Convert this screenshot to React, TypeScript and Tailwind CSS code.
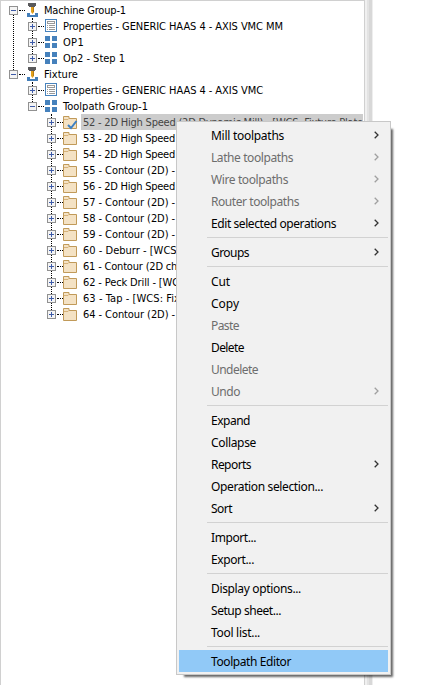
import { useLayoutEffect, useRef, useState } from 'react';

type IconKind = 'machine' | 'props' | 'group' | 'folder' | 'checked';
type Row = { level: number; icon: IconKind; label: string; width: number; open?: boolean; selected?: boolean };

const rows: Row[] = [
  { level: 0, icon: 'machine', label: 'Machine Group-1', width: 82, open: true },
  { level: 1, icon: 'props', label: 'Properties - GENERIC HAAS 4 - AXIS VMC MM', width: 220 },
  { level: 1, icon: 'group', label: 'OP1', width: 21 },
  { level: 1, icon: 'group', label: 'Op2 - Step 1', width: 62 },
  { level: 0, icon: 'machine', label: 'Fixture', width: 34, open: true },
  { level: 1, icon: 'props', label: 'Properties - GENERIC HAAS 4 - AXIS VMC', width: 200 },
  { level: 1, icon: 'group', label: 'Toolpath Group-1', width: 85, open: true },
  { level: 2, icon: 'checked', label: '52 - 2D High Speed (2D Dynamic Mill) - [WCS: Fixture Plate', width: 280, selected: true },
  { level: 2, icon: 'folder', label: '53 - 2D High Speed', width: 92 },
  { level: 2, icon: 'folder', label: '54 - 2D High Speed', width: 92 },
  { level: 2, icon: 'folder', label: '55 - Contour (2D) -', width: 92 },
  { level: 2, icon: 'folder', label: '56 - 2D High Speed', width: 92 },
  { level: 2, icon: 'folder', label: '57 - Contour (2D) -', width: 92 },
  { level: 2, icon: 'folder', label: '58 - Contour (2D) -', width: 92 },
  { level: 2, icon: 'folder', label: '59 - Contour (2D) -', width: 92 },
  { level: 2, icon: 'folder', label: '60 - Deburr - [WCS:', width: 97 },
  { level: 2, icon: 'folder', label: '61 - Contour (2D cha', width: 100 },
  { level: 2, icon: 'folder', label: '62 - Peck Drill - [WC', width: 96 },
  { level: 2, icon: 'folder', label: '63 - Tap - [WCS: Fix', width: 97 },
  { level: 2, icon: 'folder', label: '64 - Contour (2D) -', width: 92 },
];

type Item = { label: string; width: number; arrow?: boolean; off?: boolean; active?: boolean };

const sections: Item[][] = [
  [
    { label: 'Mill toolpaths', width: 73, arrow: true },
    { label: 'Lathe toolpaths', width: 82, arrow: true, off: true },
    { label: 'Wire toolpaths', width: 77, arrow: true, off: true },
    { label: 'Router toolpaths', width: 88, arrow: true, off: true },
    { label: 'Edit selected operations', width: 125, arrow: true },
  ],
  [{ label: 'Groups', width: 38, arrow: true }],
  [
    { label: 'Cut', width: 19 },
    { label: 'Copy', width: 28 },
    { label: 'Paste', width: 28, off: true },
    { label: 'Delete', width: 33 },
    { label: 'Undelete', width: 47, off: true },
    { label: 'Undo', width: 29, arrow: true, off: true },
  ],
  [
    { label: 'Expand', width: 39 },
    { label: 'Collapse', width: 45 },
    { label: 'Reports', width: 40, arrow: true },
    { label: 'Operation selection...', width: 112 },
    { label: 'Sort', width: 21, arrow: true },
  ],
  [
    { label: 'Import...', width: 45 },
    { label: 'Export...', width: 43 },
  ],
  [
    { label: 'Display options...', width: 90 },
    { label: 'Setup sheet...', width: 70 },
    { label: 'Tool list...', width: 49 },
  ],
  [{ label: 'Toolpath Editor', width: 80, active: true }],
];

// Spreads a label's letters evenly so that it takes up the given width.
function FitText({ text, width }: { text: string; width: number }) {
  const ref = useRef<HTMLSpanElement>(null);
  const [spacing, setSpacing] = useState(0);
  useLayoutEffect(() => {
    if (ref.current) {
      setSpacing((width - ref.current.getBoundingClientRect().width) / text.length);
    }
  }, [text, width]);
  return (
    <span ref={ref} className="whitespace-pre" style={{ letterSpacing: spacing }}>
      {text}
    </span>
  );
}

function Expander({ open }: { open?: boolean }) {
  return (
    <svg className="mt-1 h-[9px] w-[9px] shrink-0" viewBox="0 0 9 9" shapeRendering="crispEdges">
      <rect x=".5" y=".5" width="8" height="8" fill="#f4f4f4" stroke="#919191" />
      <path d={open ? 'M2 4.5h5' : 'M2 4.5h5M4.5 2v5'} stroke="#3c5aa8" />
    </svg>
  );
}

function RowIcon({ kind }: { kind: IconKind }) {
  if (kind === 'machine') {
    return (
      <svg className="mt-px h-[14px] w-[11px] shrink-0" viewBox="0 0 11 14">
        <path d="M0 10h3v2h5v-2h3v4H0z" fill="#447fba" />
        <path d="M1 0h8v3H8v1H2V3H1z" fill="#59595b" />
        <path d="M4 4h3v5L5.500 11 4 9z" fill="#e3a11c" />
        <path d="M6 4h1v5H6z" fill="#b57c16" />
      </svg>
    );
  }
  if (kind === 'props') {
    return (
      <svg className="mt-px h-[13px] w-3 shrink-0" viewBox="0 0 12 13" shapeRendering="crispEdges">
        <rect x=".5" y=".5" width="11" height="12" fill="#fff" stroke="#4883bd" />
        <rect x="2.5" y="2.5" width="7" height="2" fill="#fff" stroke="#999" />
        <path d="M2 6.5h1M4 6.5h6M2 8.5h1M4 8.5h6M2 10.5h1M4 10.5h6" stroke="#999" />
      </svg>
    );
  }
  if (kind === 'group') {
    return (
      <svg className="mt-[2px] h-3 w-3 shrink-0" viewBox="0 0 12 12">
        <path d="M0 0h5v5H0zM7 0h5v5H7zM0 7h5v5H0zM7 7h5v5H7z" fill="#4581bc" />
      </svg>
    );
  }
  return (
    <svg className="mt-[2px] h-[13px] w-[14px] shrink-0 overflow-visible" viewBox="0 0 14 13">
      <path d="M.5 .5h5.500v2h7.500v10H.5z" fill="#f4e2c4" stroke="#c19a59" />
      <path d="M1 3.500h4l1-1" fill="none" stroke="#d5b27b" />
      {kind === 'checked' && <path d="M5 9l3 3L13.500 5" fill="none" stroke="#3d80c4" strokeWidth="2" />}
    </svg>
  );
}

const indent = ['pl-[8px]', 'pl-[27px]', 'pl-[46px]'];
const iconGap = ['w-[9px]', 'w-[8px]', 'w-[7px]'];
const labelGap = ['pl-[6px]', 'pl-[6px]', 'pl-[4px]'];

function Tree() {
  return (
    <div className="relative h-[685px] w-[365px] shrink-0 overflow-hidden border-x border-t border-[#d0d0d0] bg-white pt-px font-['DejaVu_Sans_Condensed','DejaVu_Sans',sans-serif] text-[11px] text-black">
      <div className="absolute left-[12px] top-[14px] h-[55px] border-l border-dotted border-black" />
      <div className="absolute left-[31px] top-[17px] h-[40px] border-l border-dotted border-black" />
      <div className="absolute left-[31px] top-[81px] h-[24px] border-l border-dotted border-black" />
      <div className="absolute left-[50px] top-[113px] h-[200px] border-l border-dotted border-black" />
      {rows.map((r) => (
        <div key={r.label} className={`relative flex h-4 items-start ${indent[r.level]}`}>
          <Expander open={r.open} />
          <div className={`mt-2 shrink-0 ${iconGap[r.level]}`}>
            <div className="ml-px w-[6px] border-t border-dotted border-black" />
          </div>
          <RowIcon kind={r.icon} />
          <div className={labelGap[r.level]}>
            <div className={`h-4 pt-px leading-4 ${r.level === 2 ? 'pl-[2px]' : ''} ${r.selected ? 'bg-[#cccccc] text-[#444]' : ''}`}>
              <FitText text={r.label} width={r.width} />
            </div>
          </div>
        </div>
      ))}
    </div>
  );
}

function ContextMenu() {
  return (
    <div className="absolute left-[176px] top-[121px] w-[215px] border border-[#c8c8c8] bg-[#f1f1f1] p-[2px] font-['Noto_Sans','Open_Sans',sans-serif] text-[12px] text-black shadow-[5px_5px_2px_-3px_rgba(0,0,0,0.6)]">
      {sections.map((items, i) => (
        <div key={items[0].label}>
          {i > 0 && (
            <div className="flex h-[7px] items-center pl-7">
              <div className="h-px w-full bg-[#d2d2d2]" />
            </div>
          )}
          {items.map((item) => (
            <div
              key={item.label}
              className={`flex h-[22px] items-center justify-between pl-8 pr-[9px] ${item.active ? 'bg-[#91c9f7]' : ''} ${item.off ? 'text-[#6d6d6d]' : ''}`}
            >
              <div className="pt-[2px]">
                <FitText text={item.label} width={item.width} />
              </div>
              {item.arrow && (
                <svg className="h-[8px] w-[5px] shrink-0" viewBox="0 0 5 8">
                  <path d="M.7.7L4 4 .7 7.300" fill="none" stroke={item.off ? '#a0a0a0' : '#333'} strokeWidth="1.300" />
                </svg>
              )}
            </div>
          ))}
        </div>
      ))}
    </div>
  );
}

export default function App() {
  return (
    <div className="relative flex h-[685px] w-[429px] overflow-hidden bg-white">
      <Tree />
      <div className="flex w-2 shrink-0">
        <div className="w-[2px] bg-[#f0f0f0]" />
        <div className="w-[2px] bg-[#e3e3e3]" />
        <div className="w-[3px] bg-[#d8d8d8]" />
        <div className="w-px bg-[#eeeeee]" />
      </div>
      <ContextMenu />
    </div>
  );
}
